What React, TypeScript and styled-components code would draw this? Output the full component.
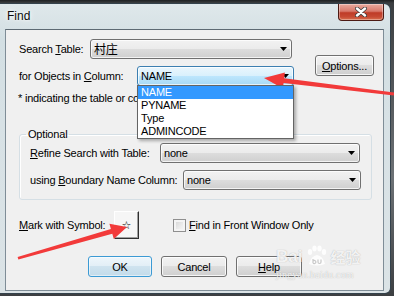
import React from 'react';
import styled, { createGlobalStyle } from 'styled-components';

const GlobalStyle = createGlobalStyle`
  html, body {
    margin: 0;
    padding: 0;
  }
  body {
    width: 394px;
    height: 296px;
    overflow: hidden;
    background: #3a3d40;
    font-family: "Liberation Sans", Arial, sans-serif;
  }
`;

const Desktop = styled.div`
  position: relative;
  width: 394px;
  height: 296px;
  box-sizing: border-box;
  padding-top: 3px;
  overflow: hidden;
  background: linear-gradient(180deg, #1e2022 0px, #3b3e41 3px, #6d7276 60%, #3c3f42 100%);
`;

const Window = styled.div`
  width: 391px;
  height: 291px;
  box-sizing: border-box;
  display: flex;
  flex-direction: column;
  padding: 0 6px 2px 5px;
  border: 1px solid #34424c;
  border-left: none;
  border-radius: 0 7px 6px 0;
  background: linear-gradient(180deg, #dfe8eb 0%, #d3dfe3 12%, #d7e1e5 40%, #dbe3e6 100%);
`;

const TitleBar = styled.div`
  height: 25px;
  display: flex;
  align-items: flex-start;
  justify-content: space-between;
`;

const Title = styled.span`
  padding: 4px 0 0 2px;
  font-size: 12px;
  line-height: 16px;
  color: #0c0c0c;
  text-shadow: 0 0 6px #fff, 0 0 3px #fff;
`;

const CloseButton = styled.div`
  width: 46px;
  height: 17px;
  box-sizing: border-box;
  display: flex;
  align-items: center;
  justify-content: center;
  border: 1px solid #4c1a13;
  border-top: none;
  border-radius: 0 0 4px 4px;
  background: linear-gradient(180deg, #e9ab9f 0%, #d8796b 45%, #bf3b27 55%, #c64a33 80%, #d9704f 100%);
  box-shadow: inset 0 0 0 1px rgba(255, 255, 255, 0.35);
`;

const Client = styled.div`
  width: 379px;
  height: 262px;
  box-sizing: border-box;
  border: 1px solid #7f8d97;
  border-top-color: #5d6a73;
  background: #f0f0f0;
  padding: 9px 0 0 13px;
  font-size: 11px;
  letter-spacing: -0.2px;
  color: #000;
`;

const Top = styled.div`
  display: flex;
  align-items: flex-start;
`;

const Column = styled.div`
  display: flex;
  flex-direction: column;
`;

const Row = styled.div<{ $mt?: number }>`
  display: flex;
  align-items: center;
  margin-top: ${p => p.$mt ?? 0}px;
`;

const Label = styled.span<{ $w?: number; $ml?: number }>`
  width: ${p => (p.$w ? `${p.$w}px` : 'auto')};
  margin-left: ${p => p.$ml ?? 0}px;
  flex: none;
  font-size: 11px;
  line-height: 13px;
  white-space: nowrap;
`;

const Combo = styled.div<{ $w: number; $hot?: boolean }>`
  position: relative;
  width: ${p => p.$w}px;
  height: 20px;
  box-sizing: border-box;
  display: flex;
  align-items: center;
  padding-left: 3px;
  border: 1px solid ${p => (p.$hot ? '#3c7fb1' : '#707070')};
  border-radius: 3px;
  background: ${p =>
    p.$hot
      ? 'linear-gradient(180deg, #eaf6fd 0%, #d9f0fc 50%, #bee6fd 50%, #a7d9f5 100%)'
      : 'linear-gradient(180deg, #f2f2f2 0%, #ebebeb 50%, #dddddd 50%, #cfcfcf 100%)'};
  box-shadow: inset 0 0 0 1px rgba(255, 255, 255, 0.75);
  font-size: 11px;
  white-space: nowrap;
`;

const ComboText = styled.span<{ $cjk?: boolean }>`
  font-family: ${p => (p.$cjk ? '"Noto Sans CJK SC", sans-serif' : '"Liberation Sans", Arial, sans-serif')};
  font-size: ${p => (p.$cjk ? 12 : 11)}px;
  line-height: 14px;
`;

const DropArrow = styled.svg`
  margin-left: auto;
  margin-right: 4px;
  flex: none;
`;

const ListBox = styled.div`
  position: absolute;
  top: 18px;
  left: -1px;
  right: -1px;
  border: 1px solid #646464;
  background: #fff;
  box-shadow: 2px 2px 3px rgba(0, 0, 0, 0.3);
  z-index: 2;
`;

const ListItem = styled.div<{ $selected?: boolean }>`
  height: 13px;
  line-height: 13px;
  padding-left: 3px;
  font-size: 11px;
  background: ${p => (p.$selected ? '#3399ff' : 'transparent')};
  color: ${p => (p.$selected ? '#fff' : '#000')};
`;

const PushButton = styled.div<{ $w: number; $focus?: boolean }>`
  width: ${p => p.$w}px;
  height: 21px;
  box-sizing: border-box;
  display: flex;
  align-items: center;
  justify-content: center;
  border: 1px solid ${p => (p.$focus ? '#3c9ad4' : '#707070')};
  border-radius: 3px;
  background: ${p =>
    p.$focus
      ? 'linear-gradient(180deg, #eef6fb 0%, #e2eef6 50%, #cfe3ef 50%, #c3dbea 100%)'
      : 'linear-gradient(180deg, #f2f2f2 0%, #ebebeb 50%, #dddddd 50%, #cfcfcf 100%)'};
  box-shadow: inset 0 0 0 1px rgba(255, 255, 255, ${p => (p.$focus ? 0.5 : 0.8)});
  font-size: 11px;
`;

const Note = styled.div`
  margin-top: 6px;
  margin-left: -1px;
  font-size: 11px;
  line-height: 13px;
  white-space: nowrap;
`;

const OptionsColumn = styled.div`
  padding: 16px 0 0 21px;
`;

const Group = styled.fieldset`
  width: 353px;
  box-sizing: border-box;
  margin: 23px 0 0 0;
  padding: 0 0 9px 10px;
  border: 1px solid #d5dfe5;
  border-radius: 3px;
  box-shadow: inset 1px 1px 0 #fff;
`;

const Legend = styled.legend`
  margin-left: -4px;
  padding: 0 2px;
  font-size: 11px;
  line-height: 13px;
`;

const SymbolButton = styled.div`
  width: 25px;
  height: 28px;
  box-sizing: border-box;
  display: flex;
  align-items: center;
  justify-content: center;
  background: #f6f6f6;
  border: 1px solid;
  border-color: #fff #303030 #303030 #fff;
  box-shadow: inset -1px -1px 0 #a0a0a0;
  font-family: "DejaVu Sans", sans-serif;
  font-size: 11px;
  letter-spacing: 0;
`;

const CheckBox = styled.div`
  width: 13px;
  height: 13px;
  box-sizing: border-box;
  margin-left: 34px;
  border: 1px solid #8f8f8f;
  background: linear-gradient(135deg, #d2d2d2 0%, #ececec 60%, #f8f8f8 100%);
  box-shadow: inset 0 0 0 2px #f4f4f4;
`;

const Buttons = styled.div`
  display: flex;
  gap: 9px;
  margin-top: 17px;
  padding-left: 69px;
`;

const Overlay = styled.svg`
  position: absolute;
  left: 0;
  top: 0;
  pointer-events: none;
`;

const Watermark = styled.div`
  position: absolute;
  left: 276px;
  top: 245px;
  display: flex;
  flex-direction: column;
  gap: 3px;
  color: rgba(255, 255, 255, 0.85);
  text-shadow: 0 0 1px rgba(120, 120, 120, 0.6);
  pointer-events: none;
`;

const MarkLine = styled.div`
  display: flex;
  align-items: center;
  gap: 3px;
  height: 22px;
`;

const MarkWord = styled.span<{ $size: number; $cjk?: boolean }>`
  font-family: ${p => (p.$cjk ? '"Noto Sans CJK SC", sans-serif' : '"Liberation Sans", Arial, sans-serif')};
  font-size: ${p => p.$size}px;
  font-weight: bold;
  line-height: ${p => p.$size}px;
`;

const MarkUrl = styled.span`
  font-family: "Liberation Serif", serif;
  font-size: 10px;
  line-height: 10px;
  letter-spacing: 0.2px;
`;

const Arrow = () => (
  <DropArrow width="7" height="4" viewBox="0 0 7 4">
    <polygon points="0,0 7,0 3.5,4" fill="#000" />
  </DropArrow>
);

const App: React.FC = () => {
  return (
    <Desktop>
      <GlobalStyle />
      <Window>
        <TitleBar>
          <Title>Find</Title>
          <CloseButton>
            <svg width="12" height="10" viewBox="0 0 12 10">
              <path d="M2 1.5 L10 8.5 M10 1.5 L2 8.5" stroke="#3a3a3a" strokeWidth="4" strokeLinecap="round" />
              <path d="M2 1.5 L10 8.5 M10 1.5 L2 8.5" stroke="#fff" strokeWidth="2.4" strokeLinecap="round" />
            </svg>
          </CloseButton>
        </TitleBar>
        <Client>
          <Top>
            <Column>
              <Row>
                <Label $w={71}>Search <u>T</u>able:</Label>
                <Combo $w={202}>
                  <ComboText $cjk>村庄</ComboText>
                  <Arrow />
                </Combo>
              </Row>
              <Row $mt={7}>
                <Label $w={118}>for Objects in <u>C</u>olumn:</Label>
                <Combo $w={157} $hot>
                  <ComboText>NAME</ComboText>
                  <Arrow />
                  <ListBox>
                    <ListItem $selected>NAME</ListItem>
                    <ListItem>PYNAME</ListItem>
                    <ListItem>Type</ListItem>
                    <ListItem>ADMINCODE</ListItem>
                  </ListBox>
                </Combo>
              </Row>
              <Note>* indicating the table or column</Note>
            </Column>
            <OptionsColumn>
              <PushButton $w={59}><span><u>O</u>ptions...</span></PushButton>
            </OptionsColumn>
          </Top>
          <Group>
            <Legend>Optional</Legend>
            <Row $mt={2}>
              <Label $w={130}><u>R</u>efine Search with Table:</Label>
              <Combo $w={200}>
                <ComboText>none</ComboText>
                <Arrow />
              </Combo>
            </Row>
            <Row $mt={7}>
              <Label $w={153}>using <u>B</u>oundary Name Column:</Label>
              <Combo $w={178}>
                <ComboText>none</ComboText>
                <Arrow />
              </Combo>
            </Row>
          </Group>
          <Row $mt={11}>
            <Label $w={95}><u>M</u>ark with Symbol:</Label>
            <SymbolButton>☆</SymbolButton>
            <CheckBox />
            <Label $ml={3}><u>F</u>ind in Front Window Only</Label>
          </Row>
          <Buttons>
            <PushButton $w={64} $focus>OK</PushButton>
            <PushButton $w={66}>Cancel</PushButton>
            <PushButton $w={66}><span><u>H</u>elp</span></PushButton>
          </Buttons>
        </Client>
      </Window>
      <Watermark>
        <MarkLine>
          <MarkWord $size={17}>Bai</MarkWord>
          <svg width="22" height="22" viewBox="0 0 22 22">
            <ellipse cx="5" cy="7" rx="2.2" ry="3" fill="rgba(255,255,255,0.85)" />
            <ellipse cx="9.5" cy="3.5" rx="2.2" ry="3" fill="rgba(255,255,255,0.85)" />
            <ellipse cx="14.5" cy="3.5" rx="2.2" ry="3" fill="rgba(255,255,255,0.85)" />
            <ellipse cx="19" cy="7" rx="2.2" ry="3" fill="rgba(255,255,255,0.85)" />
            <path d="M4 19 Q6 11 12 10 Q18 11 20 19 Q12 22 4 19 Z" fill="rgba(255,255,255,0.85)" />
            <path d="M8 14 v4 M8 16 a1.6 1.6 0 1 1 0 2 M13 14.5 v2.5 a1.5 1.5 0 0 0 3 0 v-2.5" stroke="rgba(150,150,150,0.5)" strokeWidth="1.2" fill="none" />
          </svg>
          <MarkWord $size={15} $cjk>经验</MarkWord>
        </MarkLine>
        <MarkUrl>jingyan.baidu.com</MarkUrl>
      </Watermark>
      <Overlay width="394" height="296" viewBox="0 0 394 296">
        <polygon
          points="264,78 284.9,72.5 284.2,78.2 394.2,92.6 393.8,95.6 283.6,83 282.9,88.4"
          fill="#f23a3a"
        />
        <polygon
          points="127,227 109.4,223.7 110.9,229 17.6,257 18.4,259.6 112.3,233.8 113.8,239.1"
          fill="#f23a3a"
        />
      </Overlay>
    </Desktop>
  );
};

export default App;
